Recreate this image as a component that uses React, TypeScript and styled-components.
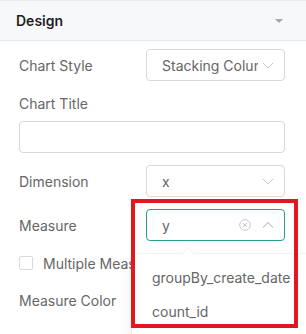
import styled, { createGlobalStyle } from 'styled-components';

const GlobalStyle = createGlobalStyle`
    body {
        margin: 0;
        background: #ffffff;
        font-family: Inter, "Noto Sans", sans-serif;
    }
`;

const Panel = styled.div`
    position: relative;
    width: 306px;
    height: 334px;
    overflow: hidden;
    border-top: 1px solid #ebebeb;
    box-sizing: border-box;
`;

const Header = styled.div`
    height: 39px;
    display: flex;
    align-items: center;
    justify-content: space-between;
    padding: 0 23px 0 16px;
    background: #f7f8fa;
    border-bottom: 1px solid #e8e8e8;
`;

const HeaderTitle = styled.div`
    font-size: 14px;
    font-weight: 600;
    color: #1f1f1f;
`;

const Caret = styled.div`
    width: 0;
    height: 0;
    border-left: 4px solid transparent;
    border-right: 4px solid transparent;
    border-top: 4px solid #a6a6a6;
`;

const Body = styled.div`
    padding: 8px 21px 0 19px;
`;

const Row = styled.div<{ $gap?: number }>`
    display: flex;
    align-items: center;
    height: 32px;
    margin-top: ${(p) => p.$gap ?? 0}px;
`;

const Label = styled.div`
    width: 127px;
    flex-shrink: 0;
    font-size: 14px;
    color: #666666;
    white-space: nowrap;
`;

const BlockLabel = styled(Label)`
    width: auto;
    line-height: 20px;
    margin-top: 13px;
`;

const Select = styled.div<{ $focused?: boolean }>`
    flex: 1;
    min-width: 0;
    height: 32px;
    box-sizing: border-box;
    display: flex;
    align-items: center;
    padding: 0 10px 0 15px;
    border: 1px solid ${(p) => (p.$focused ? '#2a9d8f' : '#d9d9d9')};
    border-radius: 4px;
    background: #ffffff;
`;

const Value = styled.div`
    flex: 1;
    min-width: 0;
    overflow: hidden;
    white-space: nowrap;
    font-size: 14px;
    color: #666666;
`;

const Input = styled.div`
    height: 32px;
    margin-top: 7px;
    box-sizing: border-box;
    border: 1px solid #d9d9d9;
    border-radius: 4px;
`;

const CheckRow = styled.div`
    display: flex;
    align-items: center;
    height: 20px;
    margin-top: 12px;
    gap: 10px;
    font-size: 14px;
    color: #666666;
    white-space: nowrap;
`;

const Checkbox = styled.div`
    width: 14px;
    height: 14px;
    box-sizing: border-box;
    border: 1px solid #d9d9d9;
    border-radius: 2px;
`;

const Icon = styled.svg<{ $gapRight?: number; $gapLeft?: number }>`
    flex-shrink: 0;
    display: block;
    margin-right: ${(p) => p.$gapRight ?? 0}px;
    margin-left: ${(p) => p.$gapLeft ?? 0}px;
`;

const Popup = styled.div`
    position: absolute;
    left: 132px;
    top: 253px;
    width: 190px;
    height: 100px;
    padding-top: 6px;
    box-sizing: border-box;
    background: #ffffff;
    border-radius: 6px;
    box-shadow: 0 3px 6px -4px rgba(0, 0, 0, 0.12), 0 6px 16px 0 rgba(0, 0, 0, 0.08), 0 0 0 1px rgba(0, 0, 0, 0.03);
`;

const Arrow = styled.div`
    position: absolute;
    left: 52px;
    top: -4px;
    width: 8px;
    height: 8px;
    background: #ffffff;
    transform: rotate(45deg);
    box-shadow: -1px -1px 2px rgba(0, 0, 0, 0.04);
`;

const Option = styled.div`
    height: 34px;
    display: flex;
    align-items: center;
    padding-left: 20px;
    font-size: 14px;
    color: #666666;
    white-space: nowrap;
`;

const Highlight = styled.div`
    position: absolute;
    left: 131px;
    top: 198px;
    width: 167px;
    height: 129px;
    box-sizing: border-box;
    border: 4px solid #e2171f;
`;

const ChevronDown = () => (
    <Icon width='12' height='12' viewBox='0 0 12 12' $gapLeft={4}>
        <polyline points='1,4 6,9 11,4' fill='none' stroke='#c8c8c8' strokeWidth='1' />
    </Icon>
);

const ChevronUp = () => (
    <Icon width='12' height='12' viewBox='0 0 12 12'>
        <polyline points='1,8.5 6,3.5 11,8.5' fill='none' stroke='#c8c8c8' strokeWidth='1.1' />
    </Icon>
);

const ClearIcon = () => (
    <Icon width='12' height='12' viewBox='0 0 12 12' $gapRight={11}>
        <circle cx='6' cy='6' r='5.3' fill='none' stroke='#c8c8c8' strokeWidth='1' />
        <path d='M4,4 L8,8 M8,4 L4,8' stroke='#c8c8c8' strokeWidth='1' />
    </Icon>
);

const App = () => {
    return (
        <>
            <GlobalStyle />
            <Panel>
                <Header>
                    <HeaderTitle>Design</HeaderTitle>
                    <Caret />
                </Header>
                <Body>
                    <Row>
                        <Label>Chart Style</Label>
                        <Select>
                            <Value>Stacking Column</Value>
                            <ChevronDown />
                        </Select>
                    </Row>
                    <BlockLabel>Chart Title</BlockLabel>
                    <Input />
                    <Row $gap={12}>
                        <Label>Dimension</Label>
                        <Select>
                            <Value>x</Value>
                            <ChevronDown />
                        </Select>
                    </Row>
                    <Row $gap={12}>
                        <Label>Measure</Label>
                        <Select $focused>
                            <Value>y</Value>
                            <ClearIcon />
                            <ChevronUp />
                        </Select>
                    </Row>
                    <CheckRow>
                        <Checkbox />
                        Multiple Measures
                    </CheckRow>
                    <Row $gap={11}>
                        <Label>Measure Color</Label>
                    </Row>
                </Body>
                <Popup>
                    <Arrow />
                    <Option>groupBy_create_date</Option>
                    <Option>count_id</Option>
                </Popup>
                <Highlight />
            </Panel>
        </>
    );
};

export default App;
